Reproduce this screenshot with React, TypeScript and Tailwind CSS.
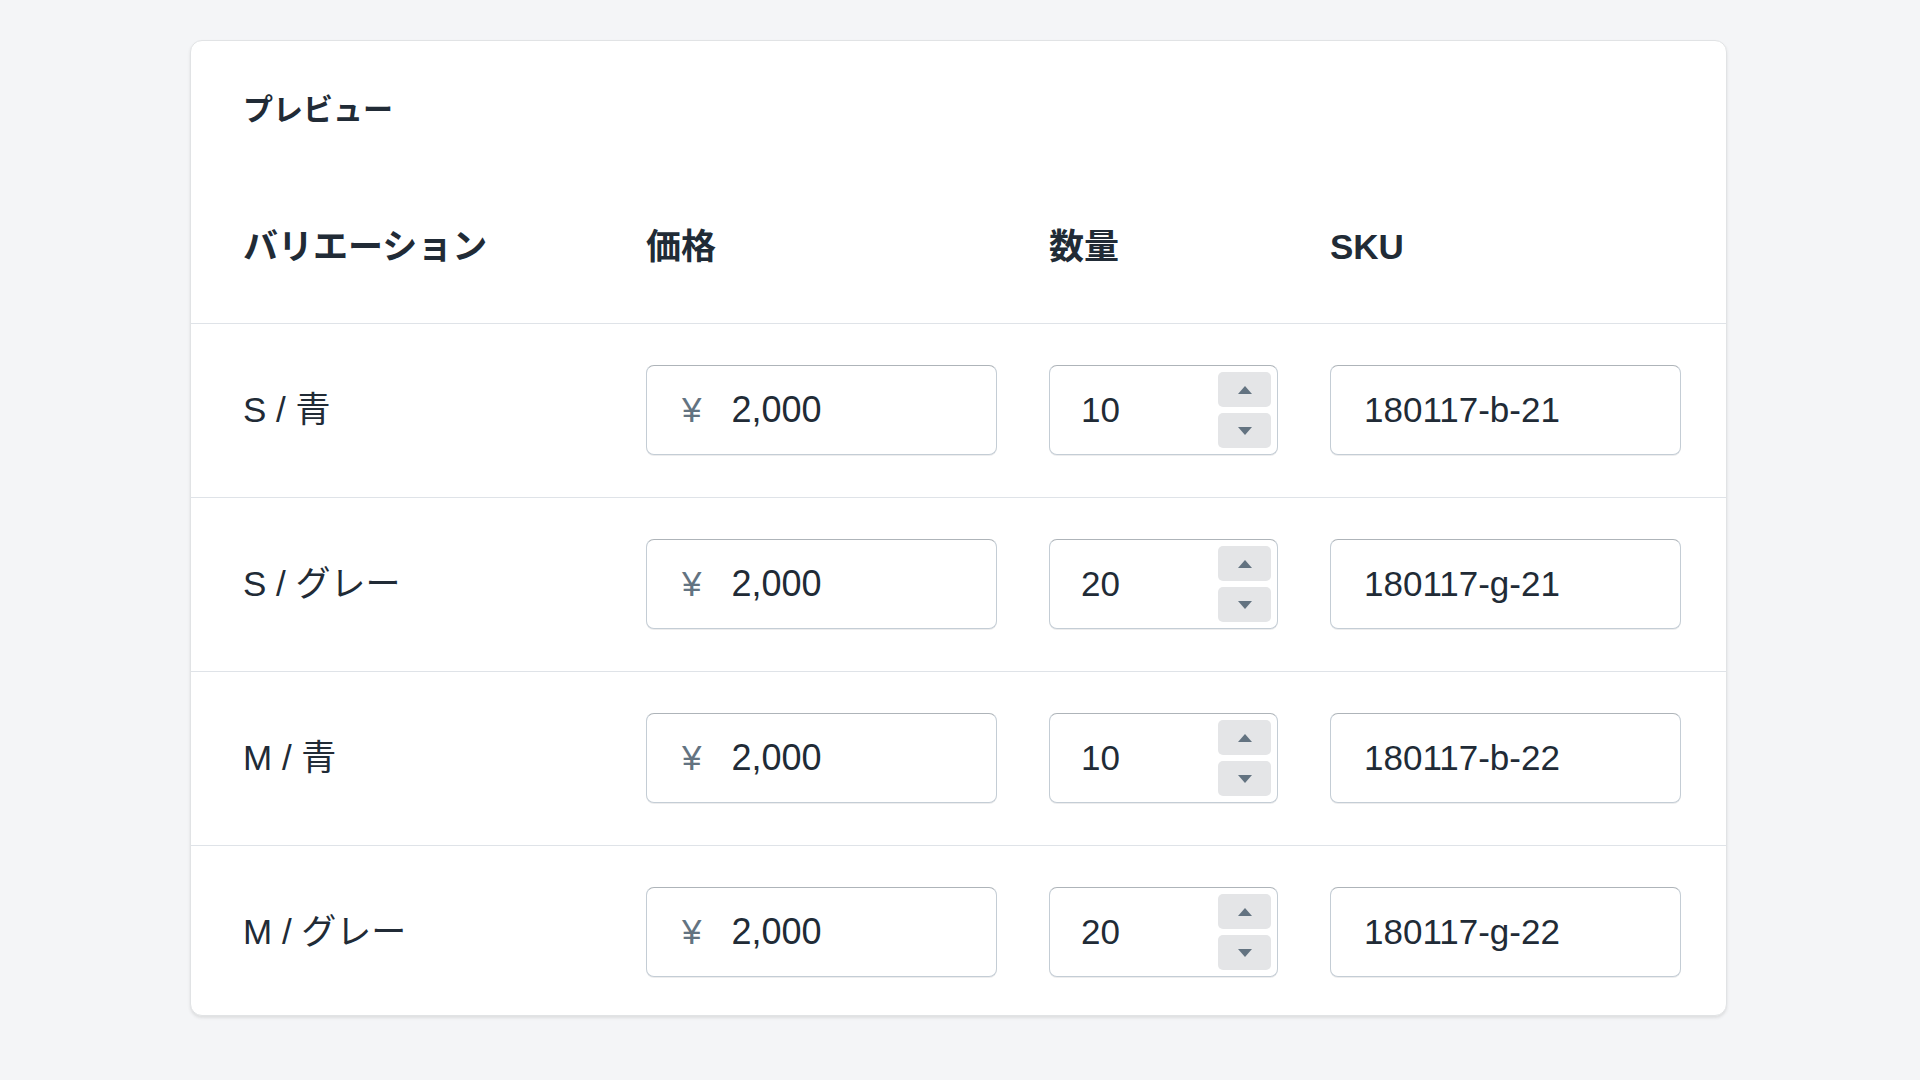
const rows = [
  { name: "S / 青", price: "2,000", qty: "10", sku: "180117-b-21" },
  { name: "S / グレー", price: "2,000", qty: "20", sku: "180117-g-21" },
  { name: "M / 青", price: "2,000", qty: "10", sku: "180117-b-22" },
  { name: "M / グレー", price: "2,000", qty: "20", sku: "180117-g-22" },
];

const font = { fontFamily: '"Liberation Sans", "Noto Sans CJK JP", sans-serif' };

function Arrow({ up }: { up?: boolean }) {
  return (
    <svg width="14" height="8" viewBox="0 0 14 8" className="fill-[#637381]">
      {up ? <path d="M7 0 L14 8 L0 8 Z" /> : <path d="M0 0 L14 0 L7 8 Z" />}
    </svg>
  );
}

function Stepper() {
  return (
    <div className="flex flex-col gap-[6px] p-[6px] h-full">
      <button className="flex-1 w-[53px] rounded-[5px] bg-[#e4e5e7] flex items-center justify-center">
        <Arrow up />
      </button>
      <button className="flex-1 w-[53px] rounded-[5px] bg-[#e4e5e7] flex items-center justify-center">
        <Arrow />
      </button>
    </div>
  );
}

const box =
  "h-[90px] rounded-[8px] border border-[#c4cdd5] border-t-[#aeb4b9] bg-white shadow-[0_1px_0_0_rgba(22,29,37,0.08)] flex items-center";

export default function App() {
  return (
    <div className="min-h-screen bg-[#f4f5f7] px-[190px] pt-[40px]" style={font}>
      <div className="w-[1537px] rounded-[12px] border border-[#e1e3e5] bg-white shadow-[0_2px_3px_rgba(63,63,68,0.12)] text-[#212b36]">
        {/* title */}
        <div className="pl-[52px] pt-[51px] text-[30px] leading-[36px] font-bold">プレビュー</div>

        {/* header */}
        <div className="flex items-center pl-[52px] pt-[97px] pb-[54px] border-b border-[#dfe3e8] text-[35px] leading-[44px] font-bold">
          <div className="w-[403px]">バリエーション</div>
          <div className="w-[403px]">価格</div>
          <div className="w-[281px]">数量</div>
          <div>SKU</div>
        </div>

        {/* rows */}
        {rows.map((r, i) => (
          <div
            key={r.sku}
            className={
              "flex items-center pl-[52px] pt-[41px] text-[35px] " +
              (i < rows.length - 1 ? "pb-[42px] border-b border-[#dfe3e8]" : "pb-[38px]")
            }
          >
            <div className="w-[403px]">{r.name}</div>
            <div className="w-[403px]">
              <div className={box + " w-[351px] pl-[35px]"}>
                <span className="text-[#637381] mr-[30px]">¥</span>
                <span className="text-[36px]">{r.price}</span>
              </div>
            </div>
            <div className="w-[281px]">
              <div className={box + " w-[229px] pl-[31px] justify-between"}>
                <span>{r.qty}</span>
                <Stepper />
              </div>
            </div>
            <div className={box + " w-[351px] pl-[33px]"}>
              <span>{r.sku}</span>
            </div>
          </div>
        ))}
      </div>
    </div>
  );
}
